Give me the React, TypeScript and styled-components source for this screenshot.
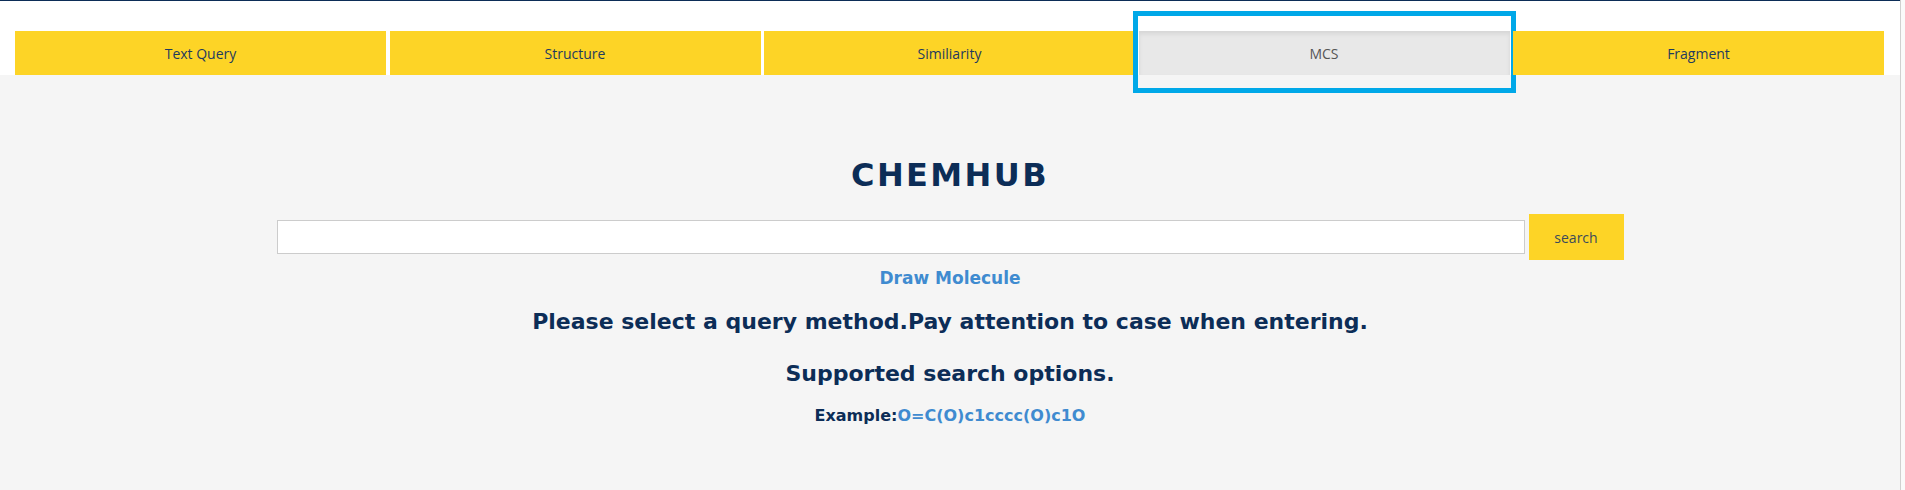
import React from "react";
import styled, { createGlobalStyle } from "styled-components";

const GlobalStyle = createGlobalStyle`
  html, body {
    margin: 0;
    padding: 0;
    background: #ffffff;
  }
`;

const Page = styled.div`
  display: flex;
  width: 1905px;
  height: 490px;
  overflow: hidden;
`;

const Main = styled.div`
  flex: 1;
  display: flex;
  flex-direction: column;
  border-top: 1px solid #0c2d57;
`;

const ScrollStrip = styled.div`
  width: 4px;
  border-left: 1px solid #d0d0d0;
  background: #fafafa;
`;

const Header = styled.div`
  background: #ffffff;
  padding: 30px 16px 0 15px;
`;

const TabRow = styled.div`
  display: flex;
  gap: 3.5px;
`;

const Tab = styled.div<{ $active?: boolean }>`
  position: relative;
  flex: 1;
  height: 44px;
  display: flex;
  align-items: center;
  justify-content: center;
  font-family: "Open Sans", "Liberation Sans", sans-serif;
  font-size: 14px;
  color: ${(p) => (p.$active ? "#555555" : "#1f3a5f")};
  background: ${(p) => (p.$active ? "#e8e8e8" : "#fdd426")};
  box-shadow: ${(p) =>
    p.$active ? "inset 0 3px 4px rgba(0, 0, 0, 0.08)" : "none"};
  cursor: pointer;
`;

const Highlight = styled.div`
  position: absolute;
  top: -20px;
  left: -6px;
  right: -6px;
  bottom: -18px;
  border: 5px solid #00a8e8;
  pointer-events: none;
`;

const Body = styled.div`
  flex: 1;
  background: #f5f5f5;
  display: flex;
  flex-direction: column;
  align-items: center;
  padding-top: 80px;
  font-family: "DejaVu Sans", "Liberation Sans", sans-serif;
  font-weight: 700;
  color: #0c2d57;
`;

const Title = styled.h1`
  margin: 0;
  font-size: 32px;
  line-height: 40px;
  letter-spacing: 2.4px;
`;

const SearchRow = styled.div`
  display: flex;
  align-items: center;
  gap: 4px;
  margin-top: 19px;
`;

const SearchInput = styled.input`
  box-sizing: border-box;
  width: 1248px;
  height: 34px;
  border: 1px solid #cccccc;
  background: #ffffff;
  outline: none;
  padding: 0 8px;
`;

const SearchButton = styled.button`
  width: 95px;
  height: 46px;
  border: none;
  background: #fdd426;
  font-family: "Open Sans", "Liberation Sans", sans-serif;
  font-size: 14px;
  color: #3b4a5a;
  cursor: pointer;
`;

const DrawLink = styled.a`
  margin-top: 6px;
  font-size: 17px;
  line-height: 24px;
  color: #3f8bd0;
  text-decoration: none;
  cursor: pointer;
`;

const Heading = styled.h3<{ $gap: number }>`
  margin: ${(p) => p.$gap}px 0 0;
  font-size: 22px;
  line-height: 30px;
`;

const Example = styled.div`
  margin-top: 15px;
  font-size: 16px;
  line-height: 24px;
`;

const Smiles = styled.span`
  color: #3f8bd0;
`;

const tabs = ["Text Query", "Structure", "Similiarity", "MCS", "Fragment"];

export default function App() {
  const active = "MCS";
  return (
    <>
      <GlobalStyle />
      <Page>
        <Main>
          <Header>
            <TabRow>
              {tabs.map((t) => (
                <Tab key={t} $active={t === active}>
                  {t}
                  {t === active && <Highlight />}
                </Tab>
              ))}
            </TabRow>
          </Header>
          <Body>
            <Title>CHEMHUB</Title>
            <SearchRow>
              <SearchInput type="text" />
              <SearchButton>search</SearchButton>
            </SearchRow>
            <DrawLink>Draw Molecule</DrawLink>
            <Heading $gap={17}>
              Please select a query method.Pay attention to case when entering.
            </Heading>
            <Heading $gap={22}>Supported search options.</Heading>
            <Example>
              Example:<Smiles>O=C(O)c1cccc(O)c1O</Smiles>
            </Example>
          </Body>
        </Main>
        <ScrollStrip />
      </Page>
    </>
  );
}
